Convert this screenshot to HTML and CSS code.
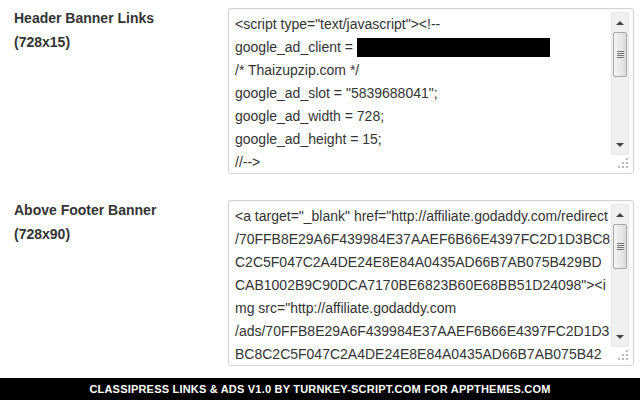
FILE: index.html
```html
<!DOCTYPE html>
<html lang="en">
<head>
  <meta charset="UTF-8" />
  <title>ClassiPress Links &amp; Ads</title>
  <link rel="stylesheet" href="styles.css">
</head>
<body>
  <div class="page">
    <div class="rows">
      <!-- Header banner -->
      <div class="row">
        <div class="label">Header Banner Links<br>(728x15)</div>
        <div class="codebox">
          <div class="code">
            <div class="line">&lt;script type="text/javascript"&gt;&lt;!--</div>
            <div class="line">google_ad_client = <span class="redacted"></span></div>
            <div class="line">/* Thaizupzip.com */</div>
            <div class="line">google_ad_slot = "5839688041";</div>
            <div class="line">google_ad_width = 728;</div>
            <div class="line">google_ad_height = 15;</div>
            <div class="line">//--&gt;</div>
          </div>
          <div class="side">
            <div class="track">
              <div class="arrow up"></div>
              <div class="thumb"><span class="grip"></span></div>
              <div class="rest"></div>
              <div class="arrow down"></div>
            </div>
            <div class="resize">
              <svg width="12" height="12" viewBox="0 0 12 12">
                <rect x="9" y="1" width="2" height="2" fill="#b8b8b8"/>
                <rect x="5" y="5" width="2" height="2" fill="#b8b8b8"/>
                <rect x="9" y="5" width="2" height="2" fill="#b8b8b8"/>
                <rect x="1" y="9" width="2" height="2" fill="#b8b8b8"/>
                <rect x="5" y="9" width="2" height="2" fill="#b8b8b8"/>
                <rect x="9" y="9" width="2" height="2" fill="#b8b8b8"/>
              </svg>
            </div>
          </div>
        </div>
      </div>

      <!-- Footer banner -->
      <div class="row">
        <div class="label">Above Footer Banner<br>(728x90)</div>
        <div class="codebox">
          <div class="code">
            <div class="line">&lt;a target="_blank" href="http://affiliate.godaddy.com/redirect</div>
            <div class="line">/70FFB8E29A6F439984E37AAEF6B66E4397FC2D1D3BC8</div>
            <div class="line">C2C5F047C2A4DE24E8E84A0435AD66B7AB075B429BD</div>
            <div class="line">CAB1002B9C90DCA7170BE6823B60E68BB51D24098"&gt;&lt;i</div>
            <div class="line">mg src="http://affiliate.godaddy.com</div>
            <div class="line">/ads/70FFB8E29A6F439984E37AAEF6B66E4397FC2D1D3</div>
            <div class="line">BC8C2C5F047C2A4DE24E8E84A0435AD66B7AB075B42</div>
          </div>
          <div class="side">
            <div class="track">
              <div class="arrow up"></div>
              <div class="thumb"><span class="grip"></span></div>
              <div class="rest"></div>
              <div class="arrow down"></div>
            </div>
            <div class="resize">
              <svg width="12" height="12" viewBox="0 0 12 12">
                <rect x="9" y="1" width="2" height="2" fill="#b8b8b8"/>
                <rect x="5" y="5" width="2" height="2" fill="#b8b8b8"/>
                <rect x="9" y="5" width="2" height="2" fill="#b8b8b8"/>
                <rect x="1" y="9" width="2" height="2" fill="#b8b8b8"/>
                <rect x="5" y="9" width="2" height="2" fill="#b8b8b8"/>
                <rect x="9" y="9" width="2" height="2" fill="#b8b8b8"/>
              </svg>
            </div>
          </div>
        </div>
      </div>
    </div>

    <footer>ClassiPress Links &amp; Ads v1.0 by turnkey-script.com for appthemes.com</footer>
  </div>
</body>
</html>
```

FILE: styles.css
```css
* {
  box-sizing: border-box;
  margin: 0;
  padding: 0;
}

html, body {
  height: 100%;
  background: #fff;
  font-family: "Liberation Sans", Arial, sans-serif;
  color: #333;
}

.page {
  display: flex;
  flex-direction: column;
  height: 100vh;
}

.rows {
  flex: 1;
  display: flex;
  flex-direction: column;
  gap: 26px;
  padding: 8px 6px 0 14px;
}

.row {
  display: flex;
}

.label {
  width: 214px;
  font-size: 14px;
  font-weight: bold;
  line-height: 24px;
  margin-top: -2px;
  color: #333;
}

/* fake textarea */
.codebox {
  width: 406px;
  height: 166px;
  border: 1px solid #d4d4d4;
  border-radius: 3px;
  background: #fff;
  box-shadow: inset 0 1px 2px rgba(0, 0, 0, 0.05);
  display: flex;
  overflow: hidden;
}

.code {
  flex: 1;
  padding: 4px 0 0 6px;
  font-size: 14px;
  line-height: 23px;
  color: #333;
  overflow: hidden;
}

.line {
  white-space: pre;
  height: 23px;
}

.redacted {
  display: inline-block;
  width: 193px;
  height: 19px;
  background: #000;
  vertical-align: -5px;
}

.side {
  width: 23px;
  padding: 3px 4px 2px 1px;
  display: flex;
  flex-direction: column;
}

.track {
  flex: 1;
  display: flex;
  flex-direction: column;
  background: #f0f0f0;
  border: 1px solid #e8e8e8;
}

.arrow {
  height: 19px;
  display: flex;
  align-items: center;
  justify-content: center;
}

.arrow::after {
  content: '';
  border-left: 4px solid transparent;
  border-right: 4px solid transparent;
}

.arrow.up::after {
  border-bottom: 4px solid #444;
}

.arrow.down::after {
  border-top: 4px solid #444;
}

.thumb {
  height: 45px;
  margin: 0 1px;
  border: 1px solid #a8a8a8;
  border-radius: 2px;
  background: linear-gradient(to right, #f4f4f4, #dcdcdc);
  display: flex;
  align-items: center;
  justify-content: center;
}

.grip {
  width: 7px;
  height: 7px;
  background: repeating-linear-gradient(to bottom, #777 0, #777 1px, transparent 1px, transparent 2px);
}

.rest {
  flex: 1;
}

.resize {
  height: 16px;
  display: flex;
  justify-content: flex-end;
  align-items: center;
}

footer {
  height: 22px;
  background: #000;
  color: #fff;
  font-size: 11px;
  font-weight: bold;
  text-transform: uppercase;
  text-align: center;
  line-height: 22px;
  letter-spacing: 0.2px;
}
```
